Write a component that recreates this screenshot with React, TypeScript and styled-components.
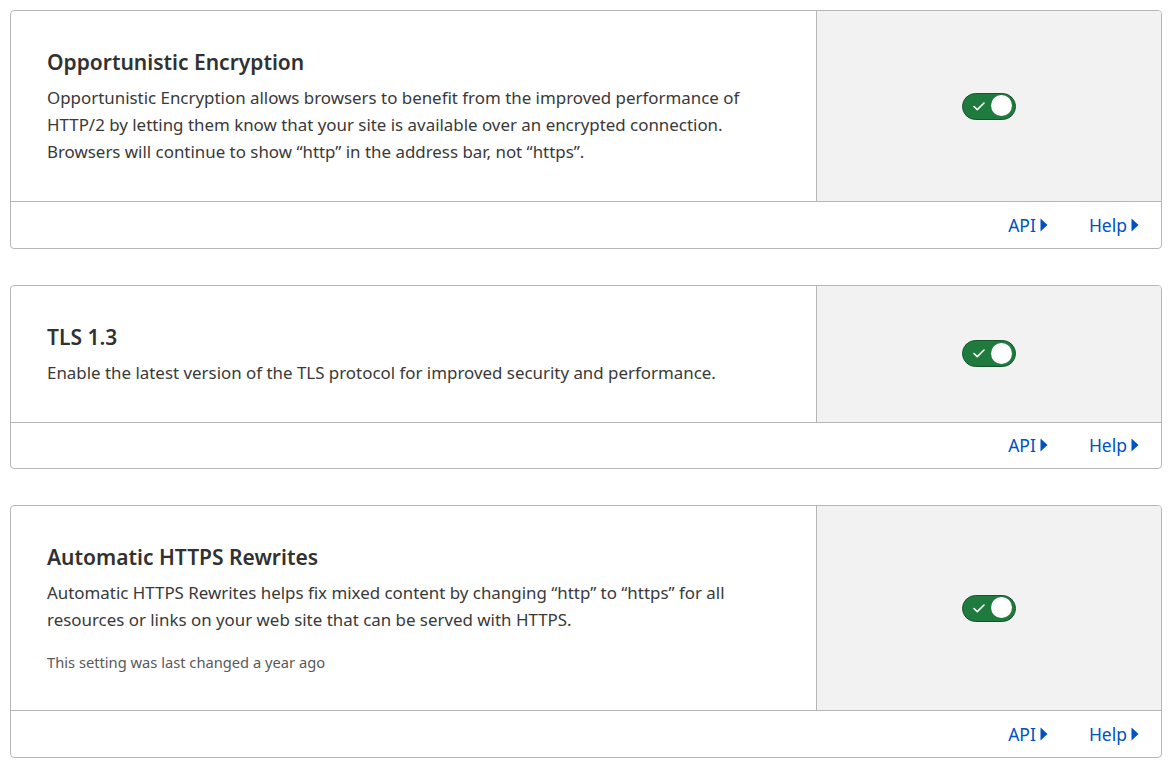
import styled, { createGlobalStyle } from "styled-components";

const GlobalStyle = createGlobalStyle`
  body {
    margin: 0;
    background: #ffffff;
    font-family: "Noto Sans", "Open Sans", sans-serif;
    color: #313131;
  }
`;

const Page = styled.div`
  display: flex;
  flex-direction: column;
  gap: 36px;
  padding: 10px 12px 10px 10px;
`;

const Card = styled.section`
  border: 1px solid #b6b6b6;
  border-radius: 4px;
  background: #ffffff;
  overflow: hidden;
`;

const CardBody = styled.div`
  display: grid;
  grid-template-columns: 1fr 345px;
  border-bottom: 1px solid #b6b6b6;
`;

const Info = styled.div`
  padding: 37px 36px 36px 36px;
`;

const Title = styled.h3`
  margin: 0 0 8px;
  font-size: 21px;
  line-height: 28px;
  font-weight: 600;
  color: #313131;
`;

const Description = styled.p`
  margin: 0;
  font-size: 16.9px;
  line-height: 27px;
  color: #393939;
  max-width: 730px;
`;

const Changed = styled.p`
  margin: 19px 0 2px;
  font-size: 14.7px;
  line-height: 20px;
  color: #595959;
`;

const ControlPanel = styled.div`
  display: flex;
  align-items: center;
  justify-content: center;
  background: #f2f2f2;
  border-left: 1px solid #b6b6b6;
`;

const Toggle = styled.button<{ $on: boolean }>`
  position: relative;
  width: 54px;
  height: 27px;
  padding: 0;
  border-radius: 14px;
  border: 1.5px solid #17542c;
  background: ${(p) => (p.$on ? "#1f7a3d" : "#bdbdbd")};
  cursor: pointer;
  display: flex;
  align-items: center;
`;

const Check = styled.svg`
  position: absolute;
  left: 10px;
  top: 8px;
`;

const Knob = styled.span<{ $on: boolean }>`
  position: absolute;
  top: 1.5px;
  left: ${(p) => (p.$on ? "27.5px" : "1.5px")};
  width: 21px;
  height: 21px;
  border-radius: 50%;
  background: #ffffff;
`;

const Footer = styled.div`
  display: flex;
  justify-content: flex-end;
  align-items: center;
  gap: 41px;
  height: 45.67px;
  padding-right: 22px;
`;

const FooterLink = styled.a`
  display: inline-flex;
  align-items: center;
  gap: 4px;
  font-size: 17.5px;
  color: #0051c3;
  text-decoration: none;
  cursor: pointer;
`;

const Arrow = () => (
  <svg width="8" height="14" viewBox="0 0 8 14">
    <path d="M0.5 0.5 L7.5 7 L0.5 13.5 Z" fill="#0051c3" />
  </svg>
);

type Setting = {
  title: string;
  description: string;
  changed?: string;
};

const settings: Setting[] = [
  {
    title: "Opportunistic Encryption",
    description:
      "Opportunistic Encryption allows browsers to benefit from the improved performance of HTTP/2 by letting them know that your site is available over an encrypted connection. Browsers will continue to show \u201chttp\u201d in the address bar, not \u201chttps\u201d.",
  },
  {
    title: "TLS 1.3",
    description:
      "Enable the latest version of the TLS protocol for improved security and performance.",
  },
  {
    title: "Automatic HTTPS Rewrites",
    description:
      "Automatic HTTPS Rewrites helps fix mixed content by changing \u201chttp\u201d to \u201chttps\u201d for all resources or links on your web site that can be served with HTTPS.",
    changed: "This setting was last changed a year ago",
  },
];

const SettingCard = ({ setting }: { setting: Setting }) => (
  <Card>
    <CardBody>
      <Info>
        <Title>{setting.title}</Title>
        <Description>{setting.description}</Description>
        {setting.changed && <Changed>{setting.changed}</Changed>}
      </Info>
      <ControlPanel>
        <Toggle $on aria-label={setting.title}>
          <Check width="12" height="9" viewBox="0 0 12 9">
            <path
              d="M1 4.5 L4.3 7.6 L11 1"
              fill="none"
              stroke="#ffffff"
              strokeWidth="1.6"
              strokeLinecap="round"
              strokeLinejoin="round"
            />
          </Check>
          <Knob $on />
        </Toggle>
      </ControlPanel>
    </CardBody>
    <Footer>
      <FooterLink>
        API
        <Arrow />
      </FooterLink>
      <FooterLink>
        Help
        <Arrow />
      </FooterLink>
    </Footer>
  </Card>
);

export default function App() {
  return (
    <>
      <GlobalStyle />
      <Page>
        {settings.map((s) => (
          <SettingCard key={s.title} setting={s} />
        ))}
      </Page>
    </>
  );
}
